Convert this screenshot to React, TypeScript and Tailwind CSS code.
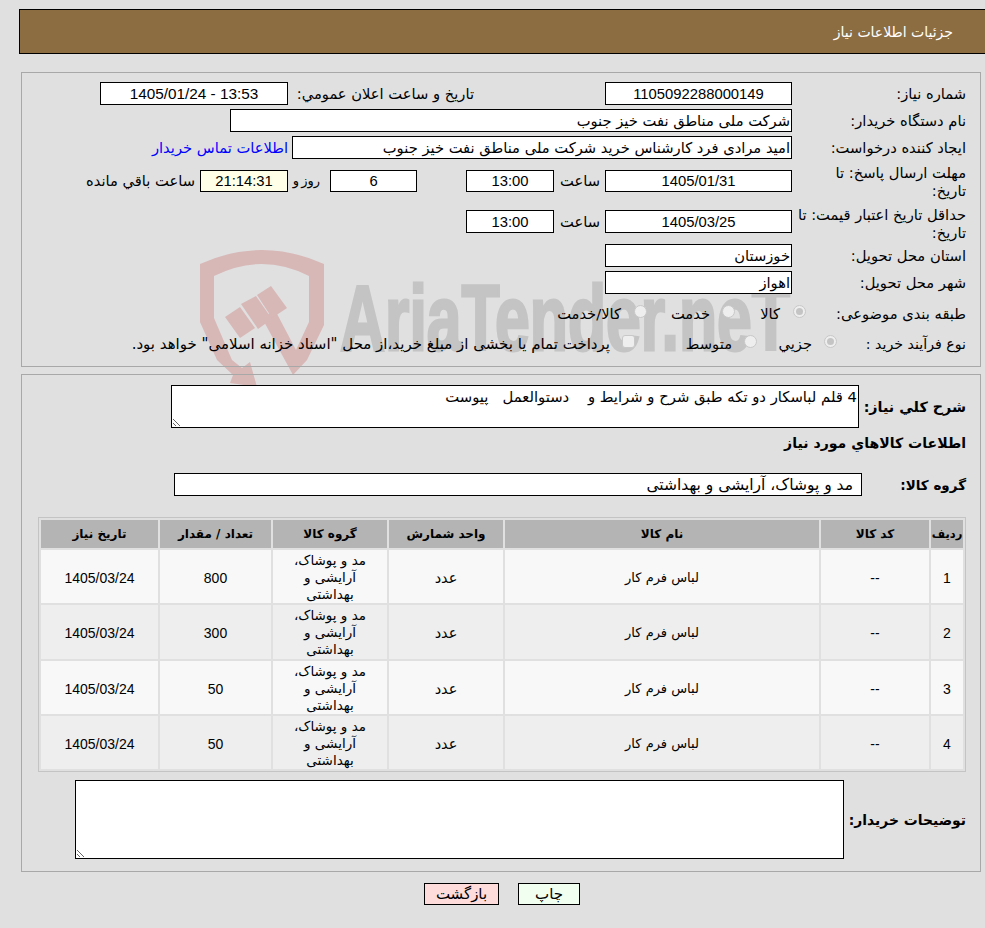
import React from "react";

const Box = ({ className = "", children }: { className?: string; children?: React.ReactNode }) => (
  <div className={"bg-white border border-black flex items-center text-black shrink-0 " + className}>{children}</div>
);

const Radio = ({ on = false, square = false, className = "" }: { on?: boolean; square?: boolean; className?: string }) => (
  <span className={"shrink-0 w-[13px] h-[13px] border border-[#c8c8c8] bg-[#eeeeee] flex items-center justify-center mt-[-6px] " + (square ? "rounded-[3px] " : "rounded-full ") + className}>
    {on ? <span className="w-[7px] h-[7px] rounded-full bg-[#c4c4c4]" /> : null}
  </span>
);

const rows = [
  ["1", "800"],
  ["2", "300"],
  ["3", "50"],
  ["4", "50"],
];

const Watermark = () => (
  <svg aria-hidden="true" dir="ltr" className="absolute left-0 top-0 pointer-events-none" width="985" height="400" viewBox="0 0 985 400">
    <g fill="#d8b7b7">
      <path fillRule="evenodd" d="M200 264 Q262 236 324 264 L324 325 L307 360 L293 375 L262 318 L275 310 L296 350 L309 322 L309 276 Q262 252 214 276 L214 318 L232 360 L242 368 L250 362 L257 387 L230 383 L233 375 L217 360 L200 322 Z" />
      <path d="M225 317 L240 307 L255 328 L240 338 Z" />
      <path d="M241 304 L256 296 L272 319 L258 329 Z" />
      <path d="M257 295 L271 286 L287 308 L272 318 Z" />
    </g>
    <text x="340" y="350" direction="ltr" fill="#c4c4c4" stroke="#c4c4c4" strokeWidth="3" fontFamily="'Liberation Sans', sans-serif" fontWeight="700" fontSize="93" textLength="450" lengthAdjust="spacingAndGlyphs">AriaTender.neT</text>
  </svg>
);

export default function App() {
  return (
    <div dir="rtl" className="relative w-[985px] h-[928px] overflow-hidden bg-[#e0e0e0] text-[14px] leading-[18px] text-black font-['Liberation_Sans','DejaVu_Sans',sans-serif]">
      <Watermark />
      <div className="relative">
        <div className="h-[9px]" />
        <div className="w-[970px] h-[45px] mr-[-4px] ml-[19px] bg-[#8c6d42] border border-black flex items-center pr-[35px] text-white text-[14px] font-['DejaVu_Sans',sans-serif]">جزئیات اطلاعات نیاز</div>

        <div className="mt-[18px] mr-[4px] ml-[21px] h-[295px] border border-[#a8a8a8] pt-[9px] pr-[14px] font-['DejaVu_Sans',sans-serif] text-[14.7px]">
          <div className="flex h-[23px] items-center">
            <div className="w-[174px] shrink-0">شماره نیاز:</div>
            <Box className="w-[187px] h-[23px] justify-center text-[14.8px] font-['Liberation_Sans',sans-serif]">1105092288000149</Box>
            <div className="w-[186px] mr-[131px] shrink-0 whitespace-nowrap">تاریخ و ساعت اعلان عمومي:</div>
            <Box className="w-[188px] h-[23px] justify-center text-[15.3px] font-['Liberation_Sans',sans-serif]" ><span dir="ltr">1405/01/24 - 13:53</span></Box>
          </div>
          <div className="flex h-[23px] items-center mt-[4px]">
            <div className="w-[174px] shrink-0">نام دستگاه خریدار:</div>
            <Box className="w-[562px] h-[23px] pr-[1px]">شرکت ملی مناطق نفت خیز جنوب</Box>
          </div>
          <div className="flex h-[23px] items-center mt-[4px]">
            <div className="w-[174px] shrink-0">ایجاد کننده درخواست:</div>
            <Box className="w-[500px] h-[23px] pr-[1px]">امید مرادی فرد کارشناس خرید شرکت ملی مناطق نفت خیز جنوب</Box>
            <a className="mr-[4px] text-[#0000ff] whitespace-nowrap">اطلاعات تماس خریدار</a>
          </div>
          <div className="flex h-[41px] mt-[4px]">
            <div className="w-[174px] shrink-0 pl-[2px] pt-[1px]">مهلت ارسال پاسخ: تا<br />تاریخ:</div>
            <div className="flex items-center h-[22px] mt-[7px]">
              <Box className="w-[187px] h-[22px] justify-center text-[14.8px] font-['Liberation_Sans',sans-serif]">1405/01/31</Box>
              <div className="w-[51px] pr-[5px] shrink-0">ساعت</div>
              <Box className="w-[88px] h-[22px] justify-center text-[14.8px] font-['Liberation_Sans',sans-serif]">13:00</Box>
              <Box className="w-[87px] h-[22px] mr-[49px] justify-center text-[14.8px] font-['Liberation_Sans',sans-serif]">6</Box>
              <div className="w-[42px] pr-[10px] shrink-0 whitespace-nowrap text-[13px] [word-spacing:-2px]">روز و</div>
              <div className="w-[88px] h-[22px] bg-[#ffffe8] border border-black flex items-center shrink-0 justify-center text-[14.8px] font-['Liberation_Sans',sans-serif]">21:14:31</div>
              <div className="mr-[5px] whitespace-nowrap">ساعت باقي مانده</div>
            </div>
          </div>
          <div className="flex h-[37px] mt-[2px]">
            <div className="w-[174px] shrink-0 pl-[2px]">حداقل تاریخ اعتبار قیمت: تا<br />تاریخ:</div>
            <div className="flex items-center h-[23px] mt-[4px]">
              <Box className="w-[187px] h-[23px] justify-center text-[14.8px] font-['Liberation_Sans',sans-serif]">1405/03/25</Box>
              <div className="w-[51px] pr-[5px] shrink-0">ساعت</div>
              <Box className="w-[88px] h-[23px] justify-center text-[14.8px] font-['Liberation_Sans',sans-serif]">13:00</Box>
            </div>
          </div>
          <div className="flex h-[23px] items-center mt-[1px]">
            <div className="w-[174px] shrink-0">استان محل تحویل:</div>
            <Box className="w-[187px] h-[23px] pr-[1px]">خوزستان</Box>
          </div>
          <div className="flex h-[23px] items-center mt-[4px]">
            <div className="w-[174px] shrink-0">شهر محل تحویل:</div>
            <Box className="w-[187px] h-[23px] pr-[1px]">اهواز</Box>
          </div>
          <div className="flex h-[22px] items-center mt-[9px]">
            <div className="w-[160px] shrink-0">طبقه بندی موضوعی:</div>
            <Radio on />
            <div className="w-[58px] pr-[13px] shrink-0">کالا</div>
            <Radio />
            <div className="w-[75px] pr-[12px] shrink-0">خدمت</div>
            <Radio />
            <div className="pr-[13px]">کالا/خدمت</div>
          </div>
          <div className="flex h-[22px] items-center mt-[8px]">
            <div className="w-[129px] shrink-0 whitespace-nowrap text-[14.2px]">نوع فرآیند خرید :</div>
            <Radio on />
            <div className="w-[67px] pr-[12px] shrink-0">جزیي</div>
            <Radio />
            <div className="w-[109px] pr-[12px] shrink-0">متوسط</div>
            <Radio square />
            <div className="pr-[12px] whitespace-nowrap text-[15px]">پرداخت تمام یا بخشی از مبلغ خرید،از محل "اسناد خزانه اسلامی" خواهد بود.</div>
          </div>
        </div>

        <div className="mt-[7px] mr-[4px] ml-[21px] h-[498px] border border-[#a8a8a8] pt-[10px] pr-[14px] font-['DejaVu_Sans',sans-serif] text-[14.7px]">
          <div className="flex items-center h-[43px]">
            <div className="w-[107px] shrink-0 font-bold text-[14.3px]">شرح کلي نیاز:</div>
            <textarea readOnly defaultValue="4 قلم لباسکار دو تکه طبق شرح و شرایط و    دستوالعمل   پیوست" className="w-[688px] h-[43px] border border-black bg-white px-[1px] pt-[2px] text-[14.8px] leading-[18px] outline-none block shrink-0" />
          </div>
          <div className="font-bold text-[14.1px] h-[18px] leading-[18px] mt-[6px]">اطلاعات کالاهاي مورد نیاز</div>
          <div className="flex items-center h-[23px] mt-[21px]">
            <div className="w-[104px] shrink-0 font-bold text-[13.5px]">گروه کالا:</div>
            <Box className="w-[688px] h-[23px] pr-[8px] text-[15.5px]">مد و پوشاک، آرایشی و بهداشتی</Box>
          </div>
          <table className="mt-[21px] w-[928px] h-[255px] border border-[#c4c4c4] border-separate border-spacing-[2px] table-fixed text-[13px] text-center">
            <colgroup>
              <col className="w-[32px]" />
              <col className="w-[108px]" />
              <col className="w-[314px]" />
              <col className="w-[114px]" />
              <col className="w-[114px]" />
              <col className="w-[111px]" />
              <col className="w-[117px]" />
            </colgroup>
            <thead>
              <tr className="h-[28px] bg-[#b4b4b4] font-bold">
                {["ردیف", "کد کالا", "نام کالا", "واحد شمارش", "گروه کالا", "تعداد / مقدار", "تاریخ نیاز"].map((h, i) => (
                  <th key={h} className={i === 0 ? "p-0 font-bold whitespace-nowrap text-[11.5px]" : "p-0 font-bold whitespace-nowrap text-[12px]"}>{h}</th>
                ))}
              </tr>
            </thead>
            <tbody>
              {rows.map((r, i) => (
                <tr key={r[0]} className={i % 2 === 0 ? "bg-[#f8f8f8]" : "bg-[#eeeeee]"}>
                  <td className="p-0 pt-[3px] text-[14px] font-['Liberation_Sans',sans-serif]">{r[0]}</td>
                  <td className="p-0 pt-[3px] text-[14px] font-['Liberation_Sans',sans-serif]">--</td>
                  <td className="p-0 pt-[3px]">لباس فرم کار</td>
                  <td className="p-0 pt-[3px] text-[14.5px]">عدد</td>
                  <td className="p-0 pt-[2px] px-[20px] leading-[17px] text-[13.5px]">مد و پوشاک، آرایشی و بهداشتی</td>
                  <td className="p-0 pt-[3px] text-[14px] font-['Liberation_Sans',sans-serif]">{r[1]}</td>
                  <td className="p-0 pt-[3px] text-[14px] font-['Liberation_Sans',sans-serif]">1405/03/24</td>
                </tr>
              ))}
            </tbody>
          </table>
          <div className="flex items-center h-[79px] mt-[8px]">
            <div className="w-[122px] shrink-0 font-bold text-[13.9px]">توضیحات خریدار:</div>
            <textarea readOnly className="w-[769px] h-[79px] border border-black bg-white outline-none block shrink-0" />
          </div>
        </div>

        <div className="flex justify-center gap-[19px] mt-[11px] mr-[4px] ml-[23px] font-['DejaVu_Sans',sans-serif] text-[15px]">
          <button className="w-[62px] h-[22px] border border-black bg-[#f0fff0] flex items-center justify-center">چاپ</button>
          <button className="w-[75px] h-[22px] border border-black bg-[#ffdcdc] flex items-center justify-center">بازگشت</button>
        </div>
      </div>
    </div>
  );
}
